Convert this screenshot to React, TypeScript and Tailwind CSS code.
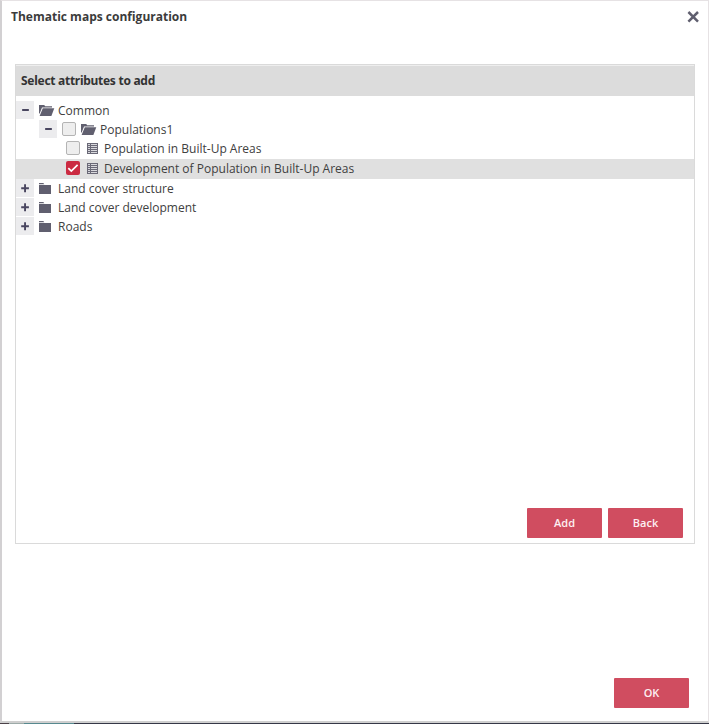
import React from "react";

function FolderOpen() {
  return (
    <svg width="16" height="12" viewBox="0 0 16 12" className="shrink-0" fill="#605f6f">
      <path d="M0 1h5.2l1 1.2H13v1.2H3L0.7 9.5H0z" />
      <path d="M3.8 4.2H15.3L12.4 12H0.6z" />
    </svg>
  );
}

function FolderClosed() {
  return (
    <svg width="12" height="12" viewBox="0 0 12 12" className="shrink-0" fill="#605f6f">
      <path d="M0 0.9h4.3L5.3 2.2H0z" />
      <path d="M0 3h12v9H0z" />
    </svg>
  );
}

function LayerIcon() {
  return (
    <svg width="11" height="11" viewBox="0 0 11 11" className="shrink-0" shapeRendering="crispEdges">
      <path d="M0 0h11v11H0z" fill="#6a6977" />
      <path d="M1 1h2v1H1zM4 1h6v1H4zM1 3h2v1H1zM4 3h6v1H4zM1 5h2v1H1zM4 5h6v1H4zM1 7h2v1H1zM4 7h6v1H4zM1 9h2v1H1zM4 9h6v1H4z" fill="#d8d8dc" />
    </svg>
  );
}

function Toggle({ open }: { open?: boolean }) {
  return (
    <span className="flex h-[18px] w-[18px] shrink-0 items-center justify-center bg-[#ececee]">
      <svg width="18" height="18" viewBox="0 0 18 18" fill="#494660">
        {open ? (
          <rect x="6" y="8" width="7" height="2" rx="0.7" />
        ) : (
          <path d="M5.2 8.3h2.9V5.3h1.9v3h2.9v1.9H10v3H8.1v-3H5.2z" />
        )}
      </svg>
    </span>
  );
}

function Check({ checked }: { checked?: boolean }) {
  return checked ? (
    <span className="h-[14px] w-[14px] shrink-0 rounded-[2px] bg-[#cb2a41]">
      <svg width="14" height="14" viewBox="0 0 14 14" fill="none" stroke="#fff" strokeWidth="1.7">
        <path d="M2.3 7.1l3 3 6.3-6.2" />
      </svg>
    </span>
  ) : (
    <span className="h-[14px] w-[14px] shrink-0 rounded-[2px] border border-[#b4b4b4] bg-[#eeeeee]" />
  );
}

function Button({ children }: { children: React.ReactNode }) {
  return (
    <button className="h-[30px] w-[75px] rounded-[1px] bg-[#d04d60] text-[11px] font-semibold leading-[30px] text-[#fdf0f2]">
      {children}
    </button>
  );
}

function Label({ children }: { children: React.ReactNode }) {
  return <span className="whitespace-nowrap pt-[2px] text-[12px] leading-[16px] text-[#404040]">{children}</span>;
}

export default function App() {
  return (
    <div className="flex h-[724px] w-[709px] flex-col bg-white font-['Open_Sans','Noto_Sans',sans-serif] text-[#444444]">
      <div className="flex min-h-0 flex-1 flex-col border-b-2 border-l-2 border-r border-t border-b-[#cfcfcf] border-l-[#d2d0d2] border-r-[#e6e2e4] border-t-[#e6e2e4]">
        <header className="flex h-[63px] items-start justify-between pl-[9px] pr-[9px] pt-[6px]">
          <h1 className="text-[12px] font-bold leading-[20px] text-[#3b3b3b]">Thematic maps configuration</h1>
          <svg width="12" height="12" viewBox="0 0 12 12" className="mt-[4px]" fill="none" stroke="#605f6f" strokeWidth="2.5">
            <path d="M1.4 1l9.6 9.6M11 1L1.4 10.6" />
          </svg>
        </header>
        <section className="ml-[13px] flex h-[480px] w-[680px] flex-col border border-[#dadada]">
          <h2 className="h-[31px] shrink-0 border-t border-[#eeeeee] bg-[#dcdcdc] pl-[5px] font-['Noto_Sans',sans-serif] text-[12px] font-bold leading-[30px] tracking-[-0.28px] text-[#333333]">
            Select attributes to add
          </h2>
          <div className="flex flex-1 flex-col pt-[5px]">
            <div className="flex h-[19px] items-start">
              <Toggle open />
              <div className="flex h-[18px] items-center gap-[3px] pl-[5px]"><FolderOpen /><Label>Common</Label></div>
            </div>
            <div className="flex h-[19px] items-start pl-[23px]">
              <Toggle open />
              <div className="flex h-[18px] items-center pl-[5px]">
                <Check />
                <div className="flex items-center gap-[3px] pl-[5px]"><FolderOpen /><Label>Populations1</Label></div>
              </div>
            </div>
            <div className="flex h-[20px] items-start pl-[50px]">
              <div className="flex h-[18px] items-center">
                <Check />
                <div className="flex items-center gap-[6px] pl-[7px]"><LayerIcon /><Label>Population in Built-Up Areas</Label></div>
              </div>
            </div>
            <div className="flex h-[20px] items-start bg-[#e0e0e0] pl-[50px]">
              <div className="flex h-[18px] items-center">
                <Check checked />
                <div className="flex items-center gap-[6px] pl-[7px]"><LayerIcon /><Label>Development of Population in Built-Up Areas</Label></div>
              </div>
            </div>
            {["Land cover structure", "Land cover development", "Roads"].map((name) => (
              <div key={name} className="flex h-[19px] items-start">
                <Toggle />
                <div className="flex h-[18px] items-center gap-[7px] pl-[5px]"><FolderClosed /><Label>{name}</Label></div>
              </div>
            ))}
          </div>
          <div className="flex justify-end gap-[6px] pb-[5px] pr-[11px]">
            <Button>Add</Button>
            <Button>Back</Button>
          </div>
        </section>
        <footer className="mt-auto flex justify-end pb-[13px] pr-[19px]">
          <Button>OK</Button>
        </footer>
      </div>
      <div className="flex h-px shrink-0 bg-[#353746]">
        <span className="w-[9px] bg-[#4b4148]" />
        <span className="w-[15px] bg-[#9caaa8]" />
        <span className="w-[50px] bg-[#56898f]" />
      </div>
    </div>
  );
}
